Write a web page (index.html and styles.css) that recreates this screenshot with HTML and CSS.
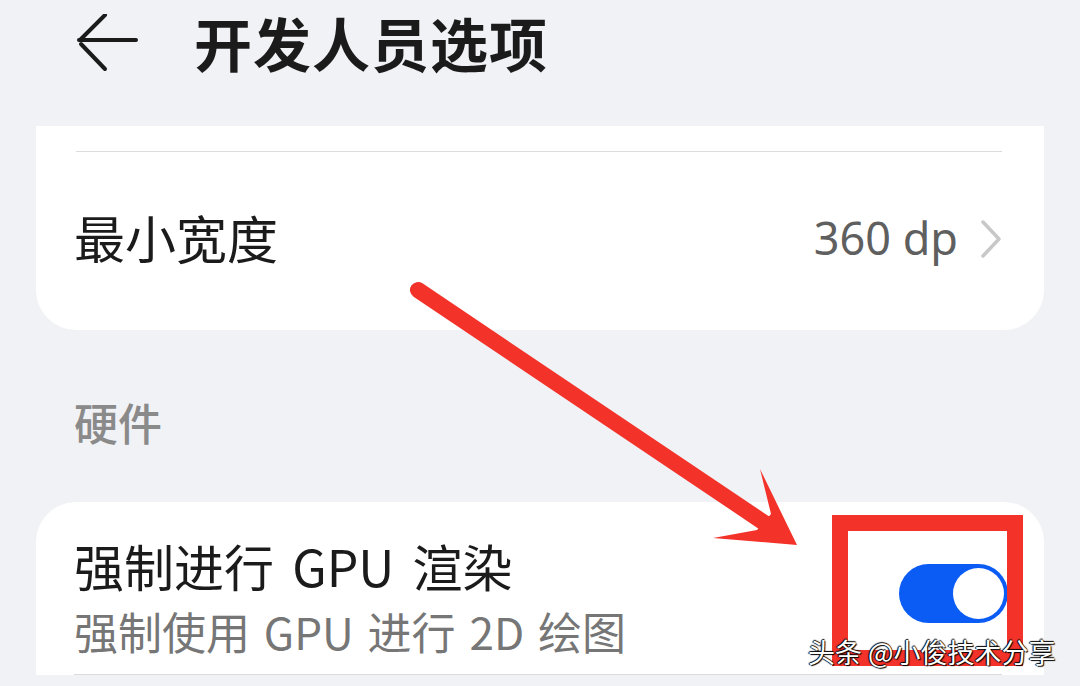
FILE: index.html
```html
<!DOCTYPE html>
<html lang="zh-CN">
<head>
    <meta charset="UTF-8">
    <meta name="viewport" content="width=device-width, initial-scale=1.0">
    <title>开发人员选项</title>
    <link rel="stylesheet" href="styles.css">
</head>
<body>
    <div class="page">
        <div class="header">
            <svg class="back-icon" width="64" height="60" viewBox="0 0 64 60">
                <path d="M3 26 H60" />
                <path d="M29 1 L5 25" />
                <path d="M5 30 L29 55" />
            </svg>
            <h1>开发人员选项</h1>
        </div>

        <div class="card card-top">
            <div class="divider"></div>
            <div class="row row-link">
                <span class="row-title">最小宽度</span>
                <span class="row-value">
                    360 dp
                    <svg class="chevron" width="22" height="38" viewBox="0 0 22 38">
                        <path d="M3 2 L19 19 L3 36" />
                    </svg>
                </span>
            </div>
        </div>

        <div class="section-label">硬件</div>

        <div class="card card-bottom">
            <div class="row row-switch">
                <div class="row-text">
                    <div class="row-title">强制进行 GPU 渲染</div>
                    <div class="row-desc">强制使用 GPU 进行 2D 绘图</div>
                </div>
                <div class="switch on">
                    <div class="knob"></div>
                </div>
            </div>
            <div class="divider"></div>
        </div>

        <!-- annotation layer -->
        <svg class="pointer" width="1080" height="686" viewBox="0 0 1080 686">
            <line x1="418" y1="290" x2="766" y2="524" />
            <polygon points="797,545 760,469 771,514 757,530 713,538" />
        </svg>
        <div class="mark-box"></div>
        <div class="watermark">头条 @小俊技术分享</div>
    </div>
</body>
</html>
```

FILE: styles.css
```css
* {
    margin: 0;
    padding: 0;
    box-sizing: border-box;
    font-family: 'Noto Sans CJK SC', 'Noto Sans', sans-serif;
}

body {
    background-color: #f1f2f6;
    overflow: hidden;
}

.page {
    position: relative;
    width: 1080px;
    height: 686px;
    overflow: hidden;
}

.header {
    display: flex;
    align-items: center;
    height: 92px;
    padding-left: 76px;
}

.back-icon {
    margin-top: -4px;
}

.back-icon path {
    fill: none;
    stroke: #1b1b1b;
    stroke-width: 4;
    stroke-linecap: round;
}

.header h1 {
    margin-left: 54px;
    margin-top: -8px;
    font-size: 58px;
    font-weight: 700;
    color: #1b1b1b;
    letter-spacing: 1px;
    line-height: 1;
}

.card {
    background: white;
    margin: 0 36px;
}

.card-top {
    margin-top: 34px;
    border-radius: 0 0 40px 40px;
    padding: 25px 42px 0 40px;
}

.divider {
    height: 1px;
    background-color: #dcdcdc;
}

.row {
    display: flex;
    justify-content: space-between;
}

.row-link {
    height: 178px;
    align-items: center;
}

.row-title {
    font-size: 50px;
    line-height: 54px;
    word-spacing: 7px;
    color: #1b1b1b;
}

.row-link .row-title {
    font-size: 51px;
    margin-left: -2px;
    margin-top: -8px;
}

.row-value {
    display: flex;
    align-items: center;
    margin-top: -8px;
    font-family: 'Noto Sans', sans-serif;
    font-size: 45px;
    color: #5f5f5f;
}

.chevron {
    margin-left: 22px;
    margin-top: 4px;
}

.chevron path {
    fill: none;
    stroke: #c8c8c8;
    stroke-width: 3.5;
    stroke-linecap: round;
    stroke-linejoin: round;
}

.section-label {
    padding: 70px 0 0 74px;
    font-size: 44px;
    line-height: 44px;
    font-weight: 500;
    color: #8a8a8a;
}

.card-bottom {
    margin-top: 58px;
    border-radius: 40px 40px 0 0;
    padding: 36px 42px 0 38px;
}

.row-desc {
    margin-top: 11px;
    font-size: 44px;
    line-height: 56px;
    word-spacing: 4px;
    color: #767676;
}

.row-switch + .divider {
    margin-top: 15px;
}

.switch {
    width: 109px;
    height: 59px;
    margin-top: 26px;
    margin-right: -6px;
    border-radius: 30px;
    background-color: #d6d6d6;
    display: flex;
    align-items: center;
    padding: 4px;
}

.switch.on {
    background-color: #0a5cf5;
    justify-content: flex-end;
}

.knob {
    width: 51px;
    height: 51px;
    border-radius: 50%;
    background: white;
}

.pointer {
    position: absolute;
    left: 0;
    top: 0;
    pointer-events: none;
}

.pointer line {
    stroke: #f3322a;
    stroke-width: 16;
    stroke-linecap: round;
}

.pointer polygon {
    fill: #f3322a;
}

.mark-box {
    position: absolute;
    left: 832px;
    top: 515px;
    width: 191px;
    height: 151px;
    border: 16px solid #f3322a;
}

.watermark {
    position: absolute;
    left: 808px;
    top: 634px;
    font-size: 27px;
    line-height: 36px;
    color: white;
    text-shadow: 1px 1px 1px #000, -1px 0 1px #000, 0 -1px 1px #000;
}
```
